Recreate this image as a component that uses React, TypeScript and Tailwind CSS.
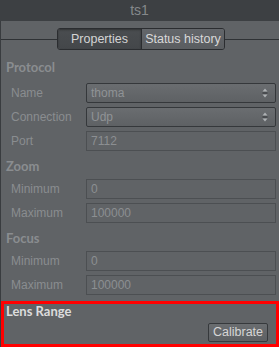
import React from "react";

const font = "font-['Liberation_Sans',Arial,sans-serif]";
const headFont = "font-['Lato','Liberation_Sans',sans-serif]";

function SpinArrows() {
  return (
    <svg width="6" height="10" viewBox="0 0 6 10" className="shrink-0">
      <path d="M3 0.5 L5.5 3.5 L0.5 3.5 Z" fill="#aeb1b4" />
      <rect x="0.5" y="4.5" width="5" height="1" fill="#2e3134" />
      <path d="M3 9.5 L5.5 6.5 L0.5 6.5 Z" fill="#aeb1b4" />
    </svg>
  );
}

function Row({
  label,
  value,
  combo,
}: {
  label: string;
  value: string;
  combo?: boolean;
}) {
  return (
    <div className="flex h-[20px] items-center">
      <div className="w-[85px] pl-[10px] text-[#8a8d90]">{label}</div>
      {combo ? (
        <div className="w-[190px] h-[20px] flex items-center justify-between pl-[4px] pr-[7px] rounded-[2px] border border-[#35383b] bg-gradient-to-b from-[#6a6d70] to-[#5e6164] text-[#909396]">
          <span className="leading-none">{value}</span>
          <SpinArrows />
        </div>
      ) : (
        <div className="w-[190px] h-[20px] flex items-center pl-[4px] border border-[#4c4f52] text-[#8c8f92]">
          <span className="leading-none">{value}</span>
        </div>
      )}
    </div>
  );
}

function Heading({ children, className = "" }: { children: React.ReactNode; className?: string }) {
  return (
    <div className={`h-[16px] flex items-center pl-[5px] text-[13px] font-bold text-[#8a8d90] ${headFont} ${className}`}>
      {children}
    </div>
  );
}

export default function App() {
  return (
    <div className={`w-[279px] h-[347px] bg-[#606366] flex flex-col overflow-hidden text-[12px] ${font}`}>
      {/* Title bar */}
      <div className="h-[21px] shrink-0 bg-[#3d4043] flex items-center justify-center text-[14px] text-[#85888b]">
        ts1
      </div>

      <div className="flex-1 flex flex-col border-l border-[#393c3f]">
        {/* Tabs */}
        <div className="mt-[7px] h-[22px] flex items-center">
          <div className="w-[56px] h-px bg-[#2f3235]" />
          <div className="w-[168px] h-[22px] flex rounded-[3px] border border-[#2b2d30] overflow-hidden text-[12.5px]">
            <div className="w-[83px] flex items-center justify-center bg-gradient-to-b from-[#4a4d50] to-[#44474a] text-[#d4d4d4] shadow-[inset_0_1px_2px_rgba(0,0,0,0.35)]">
              Properties
            </div>
            <div className="flex-1 flex items-center justify-center border-l border-[#2b2d30] bg-gradient-to-b from-[#63666a] to-[#5a5d60] text-[#d8d8d8]">
              Status history
            </div>
          </div>
          <div className="flex-1 h-px bg-[#2f3235]" />
        </div>

        {/* Protocol */}
        <Heading className="mt-[10px]">Protocol</Heading>
        <div className="mt-[7px] flex flex-col gap-[4px]">
          <Row label="Name" value="thoma" combo />
          <Row label="Connection" value="Udp" combo />
          <Row label="Port" value="7112" />
        </div>

        {/* Zoom */}
        <Heading className="mt-[8px]">Zoom</Heading>
        <div className="mt-[4px] flex flex-col gap-[4px]">
          <Row label="Minimum" value="0" />
          <Row label="Maximum" value="100000" />
        </div>

        {/* Focus */}
        <Heading className="mt-[8px]">Focus</Heading>
        <div className="mt-[4px] flex flex-col gap-[4px]">
          <Row label="Minimum" value="0" />
          <Row label="Maximum" value="100000" />
        </div>

        {/* Lens Range */}
        <div className="mt-[6px] flex-1 border-[3px] border-[#ff0000] flex flex-col">
          <div className={`h-[16px] flex items-center pl-[2px] text-[13px] font-bold text-[#dcdcdc] ${headFont}`}>
            Lens Range
          </div>
          <div className="mt-[3px] flex justify-end pr-[8px]">
            <button className="w-[60px] h-[19px] flex items-center justify-center rounded-[2px] border border-[#36393c] bg-gradient-to-b from-[#6a6d70] to-[#5d6063] text-[#d6d6d6] text-[12.5px] leading-none">
              Calibrate
            </button>
          </div>
        </div>
      </div>
    </div>
  );
}
